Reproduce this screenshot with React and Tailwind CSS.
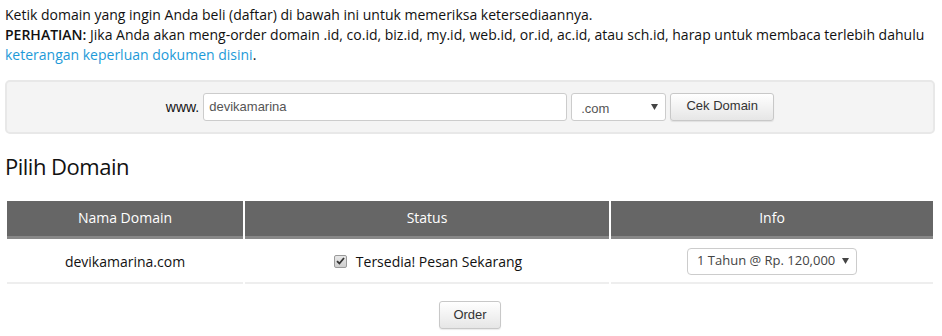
import React from "react";

const os = { fontFamily: '"Open Sans", "Liberation Sans", sans-serif' };
const ar = { fontFamily: '"Liberation Sans", Arial, sans-serif' };

function Caret() {
  return (
    <svg width="7" height="6" viewBox="0 0 7 6" className="absolute right-[7px] top-1/2 -translate-y-1/2">
      <path d="M0 0H7L3.5 6Z" fill="#444" />
    </svg>
  );
}

export default function App() {
  return (
    <div className="w-[942px] h-[336px] bg-white overflow-hidden text-[#111]" style={os}>
      <div className="ml-[5px] w-[930px]">
        <div className="pt-[5px] text-[14px] leading-[20px]">
          <p>Ketik domain yang ingin Anda beli (daftar) di bawah ini untuk memeriksa ketersediaannya.</p>
          <p>
            <b className="font-semibold">PERHATIAN:</b> Jika Anda akan meng-order domain .id, co.id, biz.id, my.id, web.id, or.id, ac.id, atau sch.id, harap untuk membaca terlebih dahulu
          </p>
          <p>
            <a className="text-[#1d9ad8]" href="#">keterangan keperluan dokumen disini</a>.
          </p>
        </div>

        <div className="mt-[15px] h-[54px] rounded-[5px] border-2 border-[#e8e8e8] bg-[#f4f4f4] flex items-center justify-center gap-[4px]" style={ar}>
          <span className="text-[14px] text-[#111]">www.</span>
          <div className="w-[364px] h-[28px] bg-white border border-[#ccc] rounded-[3px] flex items-center px-[5px] text-[13px] text-[#555]">
            devikamarina
          </div>
          <div className="relative w-[95px] h-[28px] bg-white border border-[#ccc] rounded-[3px] flex items-center px-[9px] text-[13px] text-[#555] pt-[3px]">
            .com
            <Caret />
          </div>
          <button className="w-[104px] h-[28px] rounded-[3px] border border-[#c8c8c8] bg-gradient-to-b from-white to-[#e6e6e6] text-[13px] text-[#333] shadow-[0_1px_1px_rgba(0,0,0,0.08)] pb-[2px]">
            Cek Domain
          </button>
        </div>

        <h2 className="mt-[17px] text-[22px] leading-[30px] text-[#111] font-medium tracking-[-0.5px]">Pilih Domain</h2>

        <table className="mt-[18px] w-[930px] border-separate border-spacing-x-[2px] border-spacing-y-[2px] text-[14px]">
          <thead>
            <tr className="text-white">
              <th className="w-[236px] h-[38px] bg-[#666] border-b-[3px] border-[#888] font-normal pb-[3px]">Nama Domain</th>
              <th className="w-[364px] bg-[#666] border-b-[3px] border-[#888] font-normal pb-[3px]">Status</th>
              <th className="bg-[#666] border-b-[3px] border-[#888] font-normal pb-[3px]">Info</th>
            </tr>
          </thead>
          <tbody>
            <tr className="text-[#111]">
              <td className="h-[43px] text-center border-b-2 border-[#eee] pb-[1px]">devikamarina.com</td>
              <td className="text-center border-b-2 border-[#eee] pb-[1px]">
                <div className="flex items-center justify-center gap-[9px] pl-[2px]">
                  <span className="w-[13px] h-[13px] rounded-[2px] border border-[#9a9a9a] bg-gradient-to-b from-[#e8e8e8] to-[#cfcfcf] flex items-center justify-center">
                    <svg width="9" height="8" viewBox="0 0 9 8">
                      <path d="M1 4.2L3.4 6.5L8 1" stroke="#333" strokeWidth="1.8" fill="none" />
                    </svg>
                  </span>
                  <span>Tersedia! Pesan Sekarang</span>
                </div>
              </td>
              <td className="text-center border-b-2 border-[#eee] pb-[1px]">
                <div className="relative inline-flex w-[170px] h-[27px] items-center bg-white border border-[#ccc] rounded-[4px] pl-[9px] text-[13px] text-[#444] align-middle">
                  1 Tahun @ Rp. 120,000
                  <Caret />
                </div>
              </td>
            </tr>
          </tbody>
        </table>

        <div className="flex justify-center mt-[15px]">
          <button className="w-[62px] h-[28px] rounded-[3px] border border-[#c8c8c8] bg-gradient-to-b from-white to-[#e6e6e6] text-[13px] text-[#333] shadow-[0_1px_1px_rgba(0,0,0,0.08)]" style={ar}>
            Order
          </button>
        </div>
      </div>
    </div>
  );
}
